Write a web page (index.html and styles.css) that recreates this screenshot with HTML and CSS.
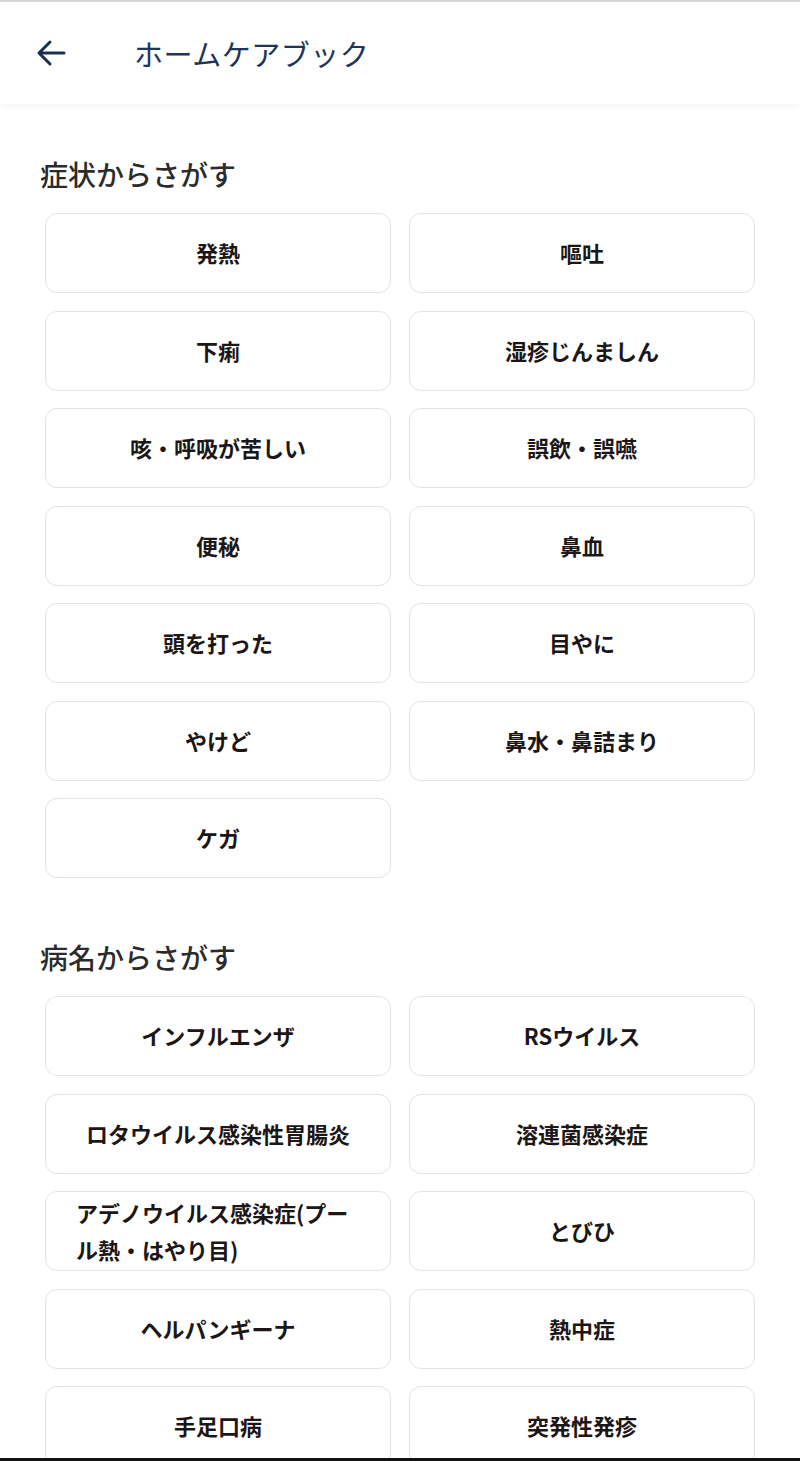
FILE: index.html
```html
<!DOCTYPE html>
<html lang="ja">
<head>
    <meta charset="UTF-8">
    <meta name="viewport" content="width=device-width, initial-scale=1.0">
    <title>ホームケアブック</title>
    <link rel="stylesheet" href="styles.css">
</head>
<body>

<header class="app-bar">
    <button class="back-btn" aria-label="戻る">
        <svg width="32" height="32" viewBox="0 0 32 32">
            <path d="M29 16H5M15 5L4 16l11 11" fill="none" stroke="#1c2e4e" stroke-width="3" stroke-linecap="round" stroke-linejoin="round"/>
        </svg>
    </button>
    <h1 class="app-title">ホームケアブック</h1>
</header>

<main class="content">
    <section class="section">
        <h2 class="section-title">症状からさがす</h2>
        <div class="grid">
            <a class="item" href="#">発熱</a>
            <a class="item" href="#">嘔吐</a>
            <a class="item" href="#">下痢</a>
            <a class="item" href="#">湿疹じんましん</a>
            <a class="item" href="#">咳・呼吸が苦しい</a>
            <a class="item" href="#">誤飲・誤嚥</a>
            <a class="item" href="#">便秘</a>
            <a class="item" href="#">鼻血</a>
            <a class="item" href="#">頭を打った</a>
            <a class="item" href="#">目やに</a>
            <a class="item" href="#">やけど</a>
            <a class="item" href="#">鼻水・鼻詰まり</a>
            <a class="item" href="#">ケガ</a>
        </div>
    </section>

    <section class="section">
        <h2 class="section-title">病名からさがす</h2>
        <div class="grid">
            <a class="item" href="#">インフルエンザ</a>
            <a class="item" href="#">RSウイルス</a>
            <a class="item" href="#">ロタウイルス感染性胃腸炎</a>
            <a class="item" href="#">溶連菌感染症</a>
            <a class="item" href="#">アデノウイルス感染症(プール熱・はやり目)</a>
            <a class="item" href="#">とびひ</a>
            <a class="item" href="#">ヘルパンギーナ</a>
            <a class="item" href="#">熱中症</a>
            <a class="item" href="#">手足口病</a>
            <a class="item" href="#">突発性発疹</a>
        </div>
    </section>
</main>

</body>
</html>
```

FILE: styles.css
```css
body {
    margin: 0;
    background-color: #fff;
    font-family: "Noto Sans CJK JP", "Noto Sans", sans-serif;
    color: #333;
}

body::after {
    content: "";
    position: fixed;
    left: 0;
    right: 0;
    bottom: 0;
    height: 3px;
    background: #111;
}

.app-bar {
    display: flex;
    align-items: center;
    height: 102px;
    border-top: 2px solid #d6d6d6;
    background: #fff;
    box-shadow: 0 4px 6px rgba(0, 0, 0, 0.03);
}

.back-btn {
    display: flex;
    align-items: center;
    justify-content: center;
    width: 40px;
    height: 40px;
    margin-left: 31px;
    padding: 0;
    border: none;
    background: none;
    cursor: pointer;
}

.app-title {
    margin: 0 0 0 63px;
    font-size: 29px;
    font-weight: 400;
    color: #1e3557;
    letter-spacing: 0.5px;
}

.content {
    padding: 50px 0 40px;
}

.section + .section {
    margin-top: 59px;
}

.section-title {
    margin: 0 0 19px 40px;
    font-size: 28px;
    font-weight: 500;
    line-height: 40px;
    color: #2b2b2b;
}

.grid {
    display: grid;
    grid-template-columns: 1fr 1fr;
    column-gap: 18px;
    row-gap: 17.5px;
    padding: 0 45px;
}

.item {
    display: flex;
    align-items: center;
    justify-content: center;
    min-height: 80px;
    padding: 0 30px;
    box-sizing: border-box;
    border: 1.5px solid #e4e4e4;
    border-radius: 12px;
    background: #fff;
    color: #1c1616;
    font-size: 22px;
    font-weight: 700;
    line-height: 1.7;
    text-decoration: none;
}
```
